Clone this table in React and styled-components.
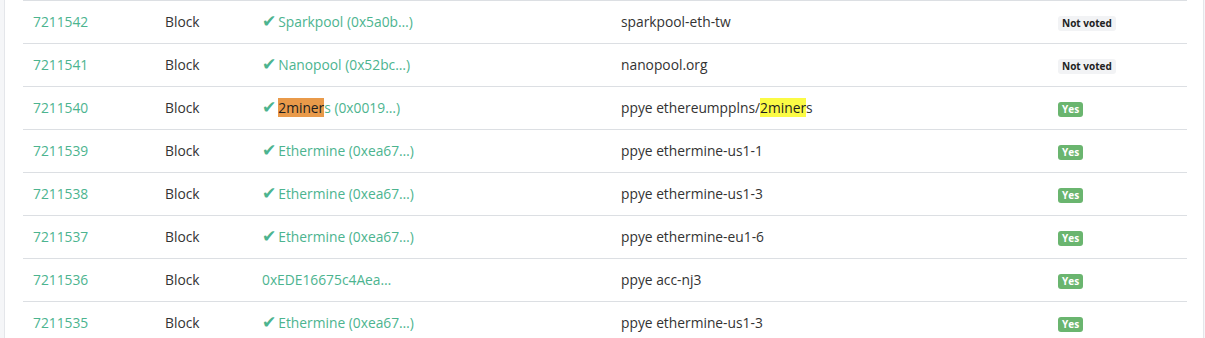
import styled, { createGlobalStyle } from 'styled-components'

const rows = [
    { number: '7211542', miner: 'Sparkpool', addr: '0x5a0b…', verified: true, extra: 'sparkpool-eth-tw', vote: 'none' },
    { number: '7211541', miner: 'Nanopool', addr: '0x52bc…', verified: true, extra: 'nanopool.org', vote: 'none' },
    { number: '7211540', miner: '2miners', addr: '0x0019…', verified: true, extra: 'ppye ethereumpplns/2miners', vote: 'yes', highlight: '2miner' },
    { number: '7211539', miner: 'Ethermine', addr: '0xea67…', verified: true, extra: 'ppye ethermine-us1-1', vote: 'yes' },
    { number: '7211538', miner: 'Ethermine', addr: '0xea67…', verified: true, extra: 'ppye ethermine-us1-3', vote: 'yes' },
    { number: '7211537', miner: 'Ethermine', addr: '0xea67…', verified: true, extra: 'ppye ethermine-eu1-6', vote: 'yes' },
    { number: '7211536', miner: '0xEDE16675c4Aea…', verified: false, extra: 'ppye acc-nj3', vote: 'yes' },
    { number: '7211535', miner: 'Ethermine', addr: '0xea67…', verified: true, extra: 'ppye ethermine-us1-3', vote: 'yes' },
]

function withMark (text, word, tone) {
    if (!word || !text.includes(word)) return text
    const i = text.indexOf(word)
    return (
        <>
            {text.slice(0, i)}
            <Mark $tone={tone}>{word}</Mark>
            {text.slice(i + word.length)}
        </>
    )
}

export default function App () {
    return (
        <>
            <GlobalStyle />
            <Panel>
                <Table>
                    {rows.map(row => (
                        <Row key={row.number}>
                            <Cell><Link>{row.number}</Link></Cell>
                            <Cell>Block</Cell>
                            <Cell>
                                <Link>
                                    {row.verified && <Check>✔</Check>}
                                    {row.verified
                                        ? <>{withMark(row.miner, row.highlight, 'orange')} ({row.addr})</>
                                        : row.miner}
                                </Link>
                            </Cell>
                            <Cell>{withMark(row.extra, row.highlight, 'yellow')}</Cell>
                            <Cell>
                                {row.vote === 'yes'
                                    ? <Badge $yes>Yes</Badge>
                                    : <Badge>Not voted</Badge>}
                            </Cell>
                        </Row>
                    ))}
                </Table>
            </Panel>
        </>
    )
}

const GlobalStyle = createGlobalStyle`
    body {
        margin: 0;
        background: #f5f6f8;
        font-family: "Open Sans", "Liberation Sans", sans-serif;
        overflow: hidden;
    }
`

const Panel = styled.div`
    margin-left: 4px;
    width: 1164px;
    min-height: 338px;
    background: #ffffff;
    border-left: 1px solid #e4e6ea;
    border-right: 1px solid #e4e6ea;
    padding: 0 16px 0 18px;
`

const Table = styled.div`
    display: flex;
    flex-direction: column;
`

const Row = styled.div`
    display: grid;
    grid-template-columns: 132px 97px 359px 437px 1fr;
    box-sizing: border-box;
    height: 43px;
    padding-bottom: 2px;
    align-items: center;
    border-top: 1px solid #dcdfe3;
`

const Cell = styled.div`
    padding: 0 10px;
    font-size: 13.8px;
    color: #333333;
    white-space: nowrap;
`

const Link = styled.span`
    color: #4cb48f;
`

const Check = styled.span`
    font-family: "DejaVu Sans", sans-serif;
    font-size: 17px;
    line-height: 1;
    margin-right: 2px;
`

const Mark = styled.span`
    color: #1e1e1e;
    background: ${p => p.$tone === 'orange' ? '#e99a4a' : '#fbfb45'};
`

const Badge = styled.span`
    display: inline-block;
    font-size: 10px;
    font-weight: 700;
    line-height: 15px;
    padding: 0 4px;
    border-radius: 3px;
    color: ${p => p.$yes ? '#ffffff' : '#222222'};
    background: ${p => p.$yes ? '#6ab56f' : '#f2f3f5'};
`
